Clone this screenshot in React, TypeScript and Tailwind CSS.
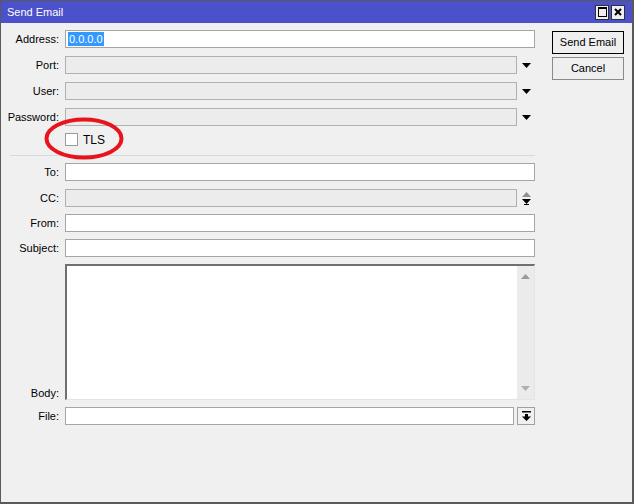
import { FC, ReactNode } from 'react';

const font = { fontFamily: '"Liberation Sans", Arial, sans-serif' };

const DropArrow: FC = () => (
    <svg width="9" height="5" viewBox="0 0 9 5" className="block">
        <path d="M0 0h9L4.5 5z" fill="#000" />
    </svg>
);

const Label: FC<{ children: ReactNode; end?: boolean }> = ({ children, end }) => (
    <div className={`w-[58px] shrink-0 text-right text-[11px] leading-[14px] text-black ${end ? 'self-end' : ''}`}>
        {children}
    </div>
);

type FieldProps = {
    label: string;
    disabled?: boolean;
    arrow?: 'drop' | 'spin';
    value?: ReactNode;
    className?: string;
};

const Field: FC<FieldProps> = ({ label, disabled, arrow, value, className = '' }) => (
    <div className={`flex h-[18px] items-center ${className}`}>
        <Label>{label}</Label>
        <div
            className={`ml-[6px] flex h-[18px] items-center border px-[2px] ${
                arrow ? 'w-[452px]' : 'w-[470px]'
            } ${disabled ? 'border-[#b0b0b0] bg-[#ececec]' : 'border-[#a5a5a5] bg-white'}`}
        >
            {value}
        </div>
        {arrow === 'drop' && (
            <div className="flex w-[18px] justify-center">
                <DropArrow />
            </div>
        )}
        {arrow === 'spin' && (
            <div className="flex w-[18px] flex-col items-center gap-[2px]">
                <svg width="9" height="5" viewBox="0 0 9 5" className="block">
                    <path d="M0 5h9L4.5 0z" fill="#8f8f8f" />
                </svg>
                <svg width="9" height="6" viewBox="0 0 9 6" className="block">
                    <path d="M0 0h9L4.5 5z" fill="#000" />
                    <path d="M2 5h5v1H2z" fill="#000" />
                </svg>
            </div>
        )}
    </div>
);

export default function App() {
    return (
        <div style={font} className="relative h-[504px] w-[634px] overflow-hidden border border-b-2 border-r-2 border-[#5a5a5a] bg-[#f0f0f0]">
            <div className="flex h-[22px] items-center justify-between bg-[#4b50cb] pl-[6px] pr-[7px]">
                <span className="text-[11px] text-white">Send Email</span>
                <div className="flex gap-[2px]">
                    <div className="flex h-[15px] w-[14px] items-center justify-center border border-[#303030] bg-[#efefef]">
                        <div className="h-[10px] w-[9px] border border-t-2 border-black" />
                    </div>
                    <div className="flex h-[15px] w-[14px] items-center justify-center border border-[#303030] bg-[#efefef]">
                        <svg width="8" height="8" viewBox="0 0 8 8">
                            <path d="M1 1l6 6M7 1L1 7" stroke="#000" strokeWidth="2" />
                        </svg>
                    </div>
                </div>
            </div>

            <div className="flex pt-[7px]">
                <div className="w-[534px] shrink-0">
                    <Field
                        label="Address:"
                        value={
                            <span className="bg-[#3399ff] px-[1px] text-[11px] leading-[14px] text-white">0.0.0.0</span>
                        }
                    />
                    <Field label="Port:" disabled arrow="drop" className="mt-[8px]" />
                    <Field label="User:" disabled arrow="drop" className="mt-[8px]" />
                    <Field label="Password:" disabled arrow="drop" className="mt-[8px]" />

                    <div className="mt-[7px] flex h-[13px] items-center pl-[64px]">
                        <div className="h-[13px] w-[13px] border border-[#9a9a9a] bg-white" />
                        <span className="ml-[5px] text-[12px] leading-[14px] text-black">TLS</span>
                    </div>

                    <div className="ml-[9px] mt-[9px] h-px bg-[#d8d8d8]" />

                    <Field label="To:" className="mt-[7px]" />
                    <Field label="CC:" disabled arrow="spin" className="mt-[8px]" />
                    <Field label="From:" className="mt-[7px]" />
                    <Field label="Subject:" className="mt-[7px]" />

                    <div className="mt-[7px] flex h-[136px]">
                        <Label end>Body:</Label>
                        <div className="ml-[6px] flex w-[470px] border-b border-l-2 border-r border-t-2 border-b-[#e4e4e4] border-l-[#707070] border-r-[#e4e4e4] border-t-[#707070] bg-white">
                            <div className="flex-1" />
                            <div className="flex w-[17px] flex-col items-center justify-between bg-[#ebebeb] py-[8px]">
                                <svg width="9" height="5" viewBox="0 0 9 5" className="block">
                                    <path d="M0 5h9L4.5 0z" fill="#9a9a9a" />
                                </svg>
                                <svg width="9" height="5" viewBox="0 0 9 5" className="block">
                                    <path d="M0 0h9L4.5 5z" fill="#b0b0b0" />
                                </svg>
                            </div>
                        </div>
                    </div>

                    <div className="mt-[7px] flex h-[18px] items-center">
                        <Label>File:</Label>
                        <div className="ml-[6px] h-[18px] w-[449px] border border-[#a5a5a5] bg-white" />
                        <div className="ml-[3px] flex h-[18px] w-[18px] items-center justify-center border border-[#a0a0a0] bg-[#f0f0f0]">
                            <svg width="9" height="10" viewBox="0 0 9 10" className="block">
                                <path d="M0 0h9v1.5H0z" fill="#000" />
                                <path d="M3 3h3v2.5h3L4.5 10 0 5.5h3z" fill="#000" />
                            </svg>
                        </div>
                    </div>
                </div>

                <div className="ml-[17px] mt-[1px] flex w-[72px] flex-col gap-[3px]">
                    <button className="h-[23px] w-full border border-black bg-[#efefef] text-[11px] text-black">
                        Send Email
                    </button>
                    <button className="h-[23px] w-full border border-[#8a8a8a] bg-[#efefef] text-[11px] text-black">
                        Cancel
                    </button>
                </div>
            </div>

            <svg className="pointer-events-none absolute left-[43px] top-[116px]" width="80" height="43" viewBox="0 0 80 43">
                <ellipse cx="40" cy="21.5" rx="37.5" ry="19" fill="none" stroke="#e8141c" strokeWidth="4" />
            </svg>
        </div>
    );
}
